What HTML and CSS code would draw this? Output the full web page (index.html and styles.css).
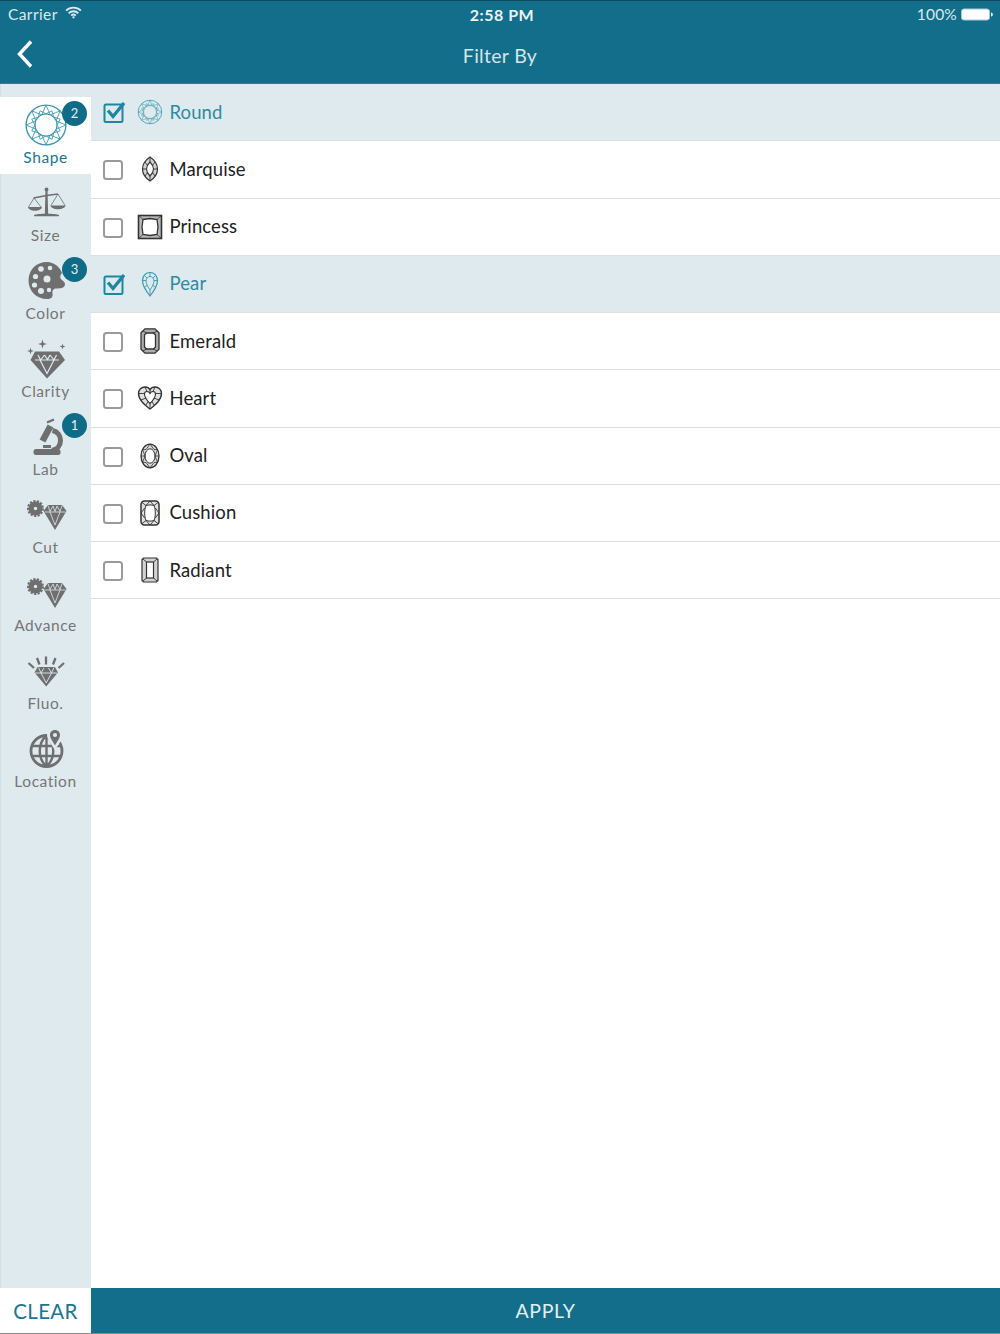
FILE: index.html
```html
<!DOCTYPE html>
<html lang="en">
<head>
<meta charset="utf-8">
<title>Filter By</title>
<link rel="stylesheet" href="styles.css">
</head>
<body>
<svg class="defs" width="0" height="0" aria-hidden="true">
  <defs>
    <g id="facet"><path d="M0-19L4-9.700L13.400-13.400M0-10.500L5.600-13.600L7.400-7.400"/></g>
    <symbol id="round" viewBox="-21 -21 42 42">
      <g fill="none" stroke="currentColor" stroke-width=".8">
        <circle r="19" stroke-width="1.300"/><circle r="10.500" stroke-width="1"/>
        <use href="#facet"/><use href="#facet" transform="rotate(45)"/><use href="#facet" transform="rotate(90)"/><use href="#facet" transform="rotate(135)"/><use href="#facet" transform="rotate(180)"/><use href="#facet" transform="rotate(225)"/><use href="#facet" transform="rotate(270)"/><use href="#facet" transform="rotate(315)"/>
      </g>
    </symbol>
    <symbol id="marquise" viewBox="0 0 26 26">
      <g fill="none" stroke="currentColor" stroke-width=".9">
        <path stroke-width="1.200" fill="currentColor" fill-opacity=".22" d="M13 1C8.500 4 5.500 9 5.500 13s3 9 7.500 12c4.500-3 7.500-8 7.500-12s-3-9-7.500-12z"/>
        <path fill="#fff" stroke-width="1.100" d="M13 6c-2 2-3.500 4.500-3.500 7s1.500 5 3.500 7c2-2 3.500-4.500 3.500-7S15 8 13 6z"/>
        <path d="M13 1v5M13 20v5M5.500 13h4M16.500 13h4M8 6l2.500 3.500M18 6l-2.500 3.500M8 20l2.500-3.500M18 20l-2.500-3.500"/>
      </g>
    </symbol>
    <symbol id="princess" viewBox="0 0 26 26">
      <g fill="none" stroke="currentColor">
        <rect x="1.500" y="1.500" width="23" height="23" stroke-width="1.600" fill="currentColor" fill-opacity=".35"/>
        <path stroke-width="1.300" fill="#fff" d="M6 5.500l7-1 7 1 1 7.500-1 7.500-7 1-7-1-1-7.500z"/>
        <path stroke-width=".8" d="M1.500 1.500L6 5.500M24.500 1.500L20 5.500M1.500 24.500L6 20.500M24.500 24.500L20 20.500"/>
      </g>
    </symbol>
    <symbol id="pear" viewBox="0 0 26 26">
      <g fill="none" stroke="currentColor" stroke-width=".9">
        <path stroke-width="1.200" d="M13 25C9 20 5.500 15 5.500 9.500 5.500 4.500 9 1.500 13 1.500s7.500 3 7.500 8C20.500 15 17 20 13 25z"/>
        <path d="M13 19c-2-3-4-6-4-9 0-2.500 2-4.500 4-4.500s4 2 4 4.500c0 3-2 6-4 9zM13 1.500v4M13 19v6M5.500 9.500H9M17 9.500h3.500M7.500 4.500L10 7M18.500 4.500L16 7M8 16l2.500-2M18 16l-2.500-2"/>
      </g>
    </symbol>
    <symbol id="emerald" viewBox="0 0 26 26">
      <g fill="none" stroke="currentColor">
        <path stroke-width="1.300" fill="currentColor" fill-opacity=".4" d="M8 .8h10l4 4v16.400l-4 4H8l-4-4V4.800z"/>
        <path stroke-width="1.300" fill="#fff" d="M9.500 5h7l2 2v12l-2 2h-7l-2-2V7z"/>
        <path stroke-width=".9" d="M6 3l3.500 2M20 3l-3.500 2M6 23l3.500-2M20 23l-3.500-2"/>
      </g>
    </symbol>
    <symbol id="heart" viewBox="0 0 26 26">
      <g fill="none" stroke="currentColor" stroke-width=".9">
        <path stroke-width="1.300" fill="currentColor" fill-opacity=".15" d="M13 24C8 20 1.500 15 1.500 8.500 1.500 4.500 4.500 2 8 2c2.200 0 4 1 5 2.800C14 3 15.800 2 18 2c3.500 0 6.500 2.500 6.500 6.500C24.500 15 18 20 13 24z"/>
        <path stroke-width="1.100" fill="#fff" d="M13 18.500C10 15.500 7.500 12 7.500 9c0-1.500 1-2.500 2.500-2.500 1.300 0 2.400.7 3 2 .6-1.300 1.700-2 3-2 1.500 0 2.500 1 2.500 2.500 0 3-2.500 6.500-5.500 9.500z"/>
        <path d="M8 2l2 4.500M18 2l-2 4.500M13 4.800v3.700M1.500 8.500h6M24.500 8.500h-6M4 15l5-2M22 15l-5-2M9 20l2-3.500M17 20l-2-3.500M13 24v-5.500"/>
      </g>
    </symbol>
    <symbol id="oval" viewBox="0 0 26 26">
      <g fill="none" stroke="currentColor" stroke-width=".8">
        <ellipse cx="13" cy="13" rx="9" ry="11.800" stroke-width="1.300" fill="currentColor" fill-opacity=".18"/>
        <ellipse cx="13" cy="13" rx="5" ry="7.200" stroke-width="1" fill="#fff"/>
        <path d="M13 1.200L9 6.500 5.500 6.500 8 13H4M13 1.200L17 6.500 20.500 6.500 18 13H22M13 24.800L9 19.500H5.500L8 13M13 24.800L17 19.500H20.500L18 13"/>
      </g>
    </symbol>
    <symbol id="cushion" viewBox="0 0 26 26">
      <g fill="none" stroke="currentColor">
        <rect x="4" y="1" width="18" height="24" rx="3.500" stroke-width="1.500" fill="currentColor" fill-opacity=".15"/>
        <path stroke-width="1" fill="#fff" d="M9 5.500c3-.8 5-.8 8 0 1 2 1.300 5 1.300 7.500s-.3 5.500-1.300 7.500c-3 .8-5 .8-8 0-1-2-1.300-5-1.300-7.500S8 7.500 9 5.500z"/>
        <path stroke-width=".9" d="M5 2.500L9 5.500M21 2.500l-4 3M5 23.500l4-3M21 23.500l-4-3M13 1l-4 4.500M13 1l4 4.500M13 25l-4-4.500M13 25l4-4.500M4 13l3.700-5M4 13l3.700 5M22 13l-3.700-5M22 13l-3.700 5"/>
      </g>
    </symbol>
    <symbol id="radiant" viewBox="0 0 26 26">
      <g fill="none" stroke="currentColor">
        <path stroke-width="1.200" fill="currentColor" fill-opacity=".22" d="M6.500 1h13l1.500 1.500v21L19.500 25h-13L5 23.500v-21z"/>
        <rect x="9.500" y="5" width="7" height="16" stroke-width="1.200" fill="#fff"/>
        <path stroke-width=".9" d="M6 2l3.500 3M20 2l-3.500 3M6 24l3.500-3M20 24l-3.500-3"/>
      </g>
    </symbol>
    <symbol id="check-off" viewBox="0 0 24 24">
      <rect x="3" y="4" width="18" height="18" rx="2.500" fill="none" stroke="#9a9a9a" stroke-width="2"/>
    </symbol>
    <symbol id="check-on" viewBox="0 0 24 24">
      <rect x="3.500" y="4.500" width="18" height="17.500" rx="1.500" fill="none" stroke="#1d86a0" stroke-width="2"/>
      <path d="M7 10.500L12 16.500 23 3" fill="none" stroke="#1d86a0" stroke-width="3.300"/>
    </symbol>
    <g id="gem-cut">
      <path d="M4.500 0H18.500L23 6 11.500 25 0 6z"/>
      <path d="M1 7H22M6.500 7l5 13 5-13M4.500 .5L6.500 6.500 9.500 1M18.500 .5L16.500 6.500 13.500 1M9.500 1l2 5.500 2-5.500" fill="none" stroke="#deeaee" stroke-width=".8"/>
    </g>
    <g id="gear">
      <circle cx="8.500" cy="8.500" r="7"/>
      <circle cx="8.500" cy="8.500" r="7.400" fill="none" stroke="#6f6f6f" stroke-width="2.200" stroke-dasharray="2.200 1.400"/>
      <circle cx="8.500" cy="8.500" r="1.700" fill="#deeaee"/>
    </g>
  </defs>
</svg>

<main class="app">
  <header class="topbar">
    <div class="status">
      <div class="status-left">
        <span>Carrier</span>
        <svg class="wifi" viewBox="0 0 18 14" width="17" height="13"><path d="M1 5a11.500 11.500 0 0 1 16 0M3.800 7.800a7.500 7.500 0 0 1 10.400 0M6.500 10.400a3.600 3.600 0 0 1 5 0" fill="none" stroke="currentColor" stroke-width="2"/><path d="M9 13.600l-1.600-1.800a2.300 2.300 0 0 1 3.200 0z" fill="currentColor"/></svg>
      </div>
      <div class="status-time">2:58 PM</div>
      <div class="status-right">
        <span>100%</span>
        <svg class="battery" viewBox="0 0 32 13" width="32" height="13"><rect x=".5" y="1" width="28" height="11" rx="2.500" fill="#fff" stroke="#a9cbd6"/><path d="M30 4.500c1.500 0 1.800 1 1.800 2s-.3 2-1.800 2z" fill="#e8f1f4"/></svg>
      </div>
    </div>
    <div class="nav">
      <svg class="back" viewBox="0 0 18 30" width="18" height="30"><path d="M15 2.500L3.500 15 15 27.500" fill="none" stroke="#fff" stroke-width="3.400"/></svg>
      <h1 class="title">Filter By</h1>
      <span class="nav-spacer"></span>
    </div>
  </header>

  <div class="body">
    <nav class="side">
      <a class="tab tab-active">
        <svg class="tab-icon"><use href="#round"/></svg>
        <span class="tab-label">Shape</span>
        <span class="badge">2</span>
      </a>
      <a class="tab">
        <svg class="tab-icon" viewBox="0 0 46 44">
          <path d="M22.500 9h2l.7 25h-3.400z" fill="#6f6f6f"/><circle cx="23.500" cy="8.500" r="1.900" fill="#6f6f6f"/>
          <path d="M10.500 17L23.500 14.500 35 13" fill="none" stroke="#6f6f6f" stroke-width="1.700"/>
          <path d="M11 34c3.500-1.600 21.500-1.600 25 0v1.200H11z" fill="#6f6f6f"/>
          <path d="M11 17L5.500 26M11 17L18 26M35 13L28 24.500M35 13L42 24.500" fill="none" stroke="#6f6f6f" stroke-width=".8"/>
          <path d="M5 26h14c-.5 2.500-3.500 3.800-7 3.800S5.500 28.500 5 26zM27.500 24.500h15c-.5 2.500-4 3.800-7.500 3.800s-7-1.300-7.500-3.800z" fill="#6f6f6f"/>
        </svg>
        <span class="tab-label">Size</span>
      </a>
      <a class="tab">
        <svg class="tab-icon" viewBox="0 0 46 44">
          <path d="M24 3C13 3 5.500 11 5.500 21.500S13.500 40 24 40c5 0 6-2.500 5.500-5.500-.5-3 1-5 4-5 4 0 8.500-.5 8.500-4.500 0-2-2-3-3-4-2.500-2-2-4.500 0-7C37 8 31 3 24 3z" fill="#6f6f6f"/>
          <g fill="#deeaee"><circle cx="18" cy="10" r="2.800"/><circle cx="27" cy="9" r="2.300"/><circle cx="12.500" cy="17.500" r="2.600"/><circle cx="24" cy="20" r="3.500"/><circle cx="11.500" cy="26" r="2.600"/><circle cx="18" cy="32" r="3"/><circle cx="26" cy="31" r="2.200"/></g>
        </svg>
        <span class="tab-label">Color</span>
        <span class="badge">3</span>
      </a>
      <a class="tab">
        <svg class="tab-icon" viewBox="0 0 46 44">
          <g fill="#6f6f6f">
            <path d="M19.500 2.500l1.100 3.400 3.400 1.100-3.400 1.100-1.100 3.400-1.100-3.400L15 7l3.400-1.100z"/>
            <path d="M7.500 10.500l.8 2.700 2.700.8-2.700.8-.8 2.700-.8-2.700L4 14l2.700-.8z"/>
            <path d="M39.500 6.500l.7 2.300 2.300.7-2.300.7-.7 2.300-.7-2.300-2.300-.7 2.300-.7z"/>
            <path d="M12 14.500H36L42 23 24 41.500 7.500 23z"/>
          </g>
          <path d="M12 23h24M17 23l7 13.500L31 23M15 18l2.500 5 4-5M33.500 18L31 23l-4-5M21.500 18l3 4.500 2.500-4.500" fill="none" stroke="#deeaee" stroke-width="1.200"/>
        </svg>
        <span class="tab-label">Clarity</span>
      </a>
      <a class="tab">
        <svg class="tab-icon" viewBox="0 0 46 44">
          <g fill="none" stroke="#6f6f6f">
            <path d="M27.500 11L19.500 26" stroke-width="6.500"/>
            <path d="M24 7.500l7-3" stroke-width="2.400"/>
            <path d="M29.500 15.500c5 1 8 5 8 10s-3.500 9-8.500 10" stroke-width="5"/>
            <path d="M20 31.500h8" stroke-width="3"/>
          </g>
          <rect x="10.500" y="34" width="27" height="6" rx="2.500" fill="#6f6f6f"/>
        </svg>
        <span class="tab-label">Lab</span>
        <span class="badge">1</span>
      </a>
      <a class="tab">
        <svg class="tab-icon" viewBox="0 0 46 44" fill="#6f6f6f">
          <use href="#gear" x="4" y="7"/>
          <use href="#gem-cut" x="20.500" y="12"/>
        </svg>
        <span class="tab-label">Cut</span>
      </a>
      <a class="tab">
        <svg class="tab-icon" viewBox="0 0 46 44" fill="#6f6f6f">
          <use href="#gear" x="4" y="7"/>
          <use href="#gem-cut" x="20.500" y="12"/>
        </svg>
        <span class="tab-label">Advance</span>
      </a>
      <a class="tab">
        <svg class="tab-icon" viewBox="0 0 46 44" fill="#6f6f6f">
          <path d="M23 7.500v8M14 9l2.500 6.500M32.500 9L30 15.500M5.500 14L11 19M41 14l-5.500 5" fill="none" stroke="#6f6f6f" stroke-width="2.300"/>
          <path d="M14.500 18H32l3 5.500L23.200 37.500 11.500 23.500z"/>
          <path d="M12 24h22M18 24l5.200 10L28.500 24M15.500 18.500L18 24l3-5M31 18.500L28.500 24l-3-5" fill="none" stroke="#deeaee" stroke-width=".9"/>
        </svg>
        <span class="tab-label">Fluo.</span>
      </a>
      <a class="tab">
        <svg class="tab-icon" viewBox="0 0 46 44">
          <circle cx="23.500" cy="24" r="15.500" fill="none" stroke="#6f6f6f" stroke-width="2.800"/>
          <path d="M23.500 8.500c-9 8-9 23 0 31M23.500 8.500c9 8 9 23 0 31M23.500 8.500v31M8.500 19h30M8.500 29h30" fill="none" stroke="#6f6f6f" stroke-width="2.400"/>
          <path d="M32 0c-4.500 0-8 3.500-8 7.800 0 5 5 10 8 15.500 3-5.500 8-10.500 8-15.500C40 3.500 36.500 0 32 0z" fill="#deeaee"/>
          <path d="M32 3c-3 0-5 2.200-5 5 0 3.500 3 6.500 5 10.500 2-4 5-7 5-10.500 0-2.800-2-5-5-5z" fill="#6f6f6f"/>
          <circle cx="32" cy="8" r="2.100" fill="#deeaee"/>
        </svg>
        <span class="tab-label">Location</span>
      </a>
    </nav>

    <ul class="list">
      <li class="row row-on"><svg class="check"><use href="#check-on"/></svg><svg class="shape"><use href="#round"/></svg><span class="row-text">Round</span></li>
      <li class="row"><svg class="check"><use href="#check-off"/></svg><svg class="shape"><use href="#marquise"/></svg><span class="row-text">Marquise</span></li>
      <li class="row"><svg class="check"><use href="#check-off"/></svg><svg class="shape"><use href="#princess"/></svg><span class="row-text">Princess</span></li>
      <li class="row row-on"><svg class="check"><use href="#check-on"/></svg><svg class="shape"><use href="#pear"/></svg><span class="row-text">Pear</span></li>
      <li class="row"><svg class="check"><use href="#check-off"/></svg><svg class="shape"><use href="#emerald"/></svg><span class="row-text">Emerald</span></li>
      <li class="row"><svg class="check"><use href="#check-off"/></svg><svg class="shape"><use href="#heart"/></svg><span class="row-text">Heart</span></li>
      <li class="row"><svg class="check"><use href="#check-off"/></svg><svg class="shape"><use href="#oval"/></svg><span class="row-text">Oval</span></li>
      <li class="row"><svg class="check"><use href="#check-off"/></svg><svg class="shape"><use href="#cushion"/></svg><span class="row-text">Cushion</span></li>
      <li class="row"><svg class="check"><use href="#check-off"/></svg><svg class="shape"><use href="#radiant"/></svg><span class="row-text">Radiant</span></li>
    </ul>
  </div>

  <footer class="foot">
    <button class="btn-clear" type="button">CLEAR</button>
    <button class="btn-apply" type="button">APPLY</button>
  </footer>
</main>
</body>
</html>
```

FILE: styles.css
```css
* { box-sizing: border-box; }
html, body { margin: 0; padding: 0; }
body { font-family: Lato, "Open Sans", sans-serif; background: #fff; color: #222; }
.defs { position: absolute; }

.app { display: flex; flex-direction: column; width: 1000px; height: 1334px; overflow: hidden; border-bottom: 1px solid #8a8a8a; }

.topbar { flex: none; height: 84px; background: #126e8a; color: #e3eef2; border-top: 1px solid #0c4a5e; border-bottom: 1px solid #2a7f98; }
.status { display: grid; grid-template-columns: 1fr auto 1fr; align-items: center; height: 26px; padding: 0 7px 0 8px; font-size: 15.500px; letter-spacing: .4px; color: #dbe9ee; }
.status-left { display: flex; align-items: center; gap: 7px; }
.wifi { margin-top: -3px; }
.status-time { font-weight: 700; font-size: 16px; letter-spacing: .5px; padding-left: 3px; color: #eaf2f5; }
.status-right { display: flex; align-items: center; justify-content: flex-end; gap: 4px; letter-spacing: .2px; }

.nav { display: grid; grid-template-columns: 1fr auto 1fr; align-items: center; height: 56px; }
.back { display: block; margin: -2px 0 0 16px; }
.title { margin: 0; font-size: 19.500px; font-weight: 400; letter-spacing: .3px; color: #d5e5ea; }

.body { flex: 1; display: flex; min-height: 0; }
.side { flex: none; width: 91px; background: #deeaee; border-left: 1px solid #cfe0e6; padding-top: 13px; }
.tab { position: relative; display: flex; flex-direction: column; align-items: center; height: 78px; padding-top: 6px; margin-left: -1px; color: #767676; }
.tab-active { background: #fff; color: #1b7691; height: 77px; margin-bottom: 1px; }
.tab-active .tab-icon { color: #3a98ae; }
.tab-icon { display: block; width: 46px; height: 44px; flex: none; }
.tab-label { height: 20px; line-height: 20px; font-size: 15.500px; letter-spacing: .55px; }
.badge { position: absolute; top: 4px; left: 62px; width: 25px; height: 25px; border-radius: 50%; background: #0f6c88; color: #e6f0f3; font-size: 13px; line-height: 25px; text-align: center; }

.list { flex: 1; margin: 0; padding: 0; list-style: none; min-width: 0; }
.row { display: flex; align-items: center; height: 57.250px; padding-left: 10px; border-bottom: 1px solid #dcdfe0; font-size: 18.500px; letter-spacing: .1px; color: #222; }
.row-text { margin-top: -1px; }
.row-on { background: #deeaee; color: #2f8aa1; }
.check { flex: none; width: 24px; height: 24px; }
.shape { flex: none; width: 26px; height: 26px; margin-left: 11.500px; margin-right: 7px; color: #333; }
.row-on .shape { color: #3a98ae; }

.foot { flex: none; display: flex; height: 45px; }
.btn-clear { flex: none; width: 91px; border: 0; padding: 0; background: #fff; color: #1b7691; font: inherit; font-size: 20.500px; letter-spacing: .3px; }
.btn-apply { flex: 1; border: 0; padding: 0; background: #126e8a; color: #e3eef2; font: inherit; font-size: 19.500px; letter-spacing: .6px; }
```
